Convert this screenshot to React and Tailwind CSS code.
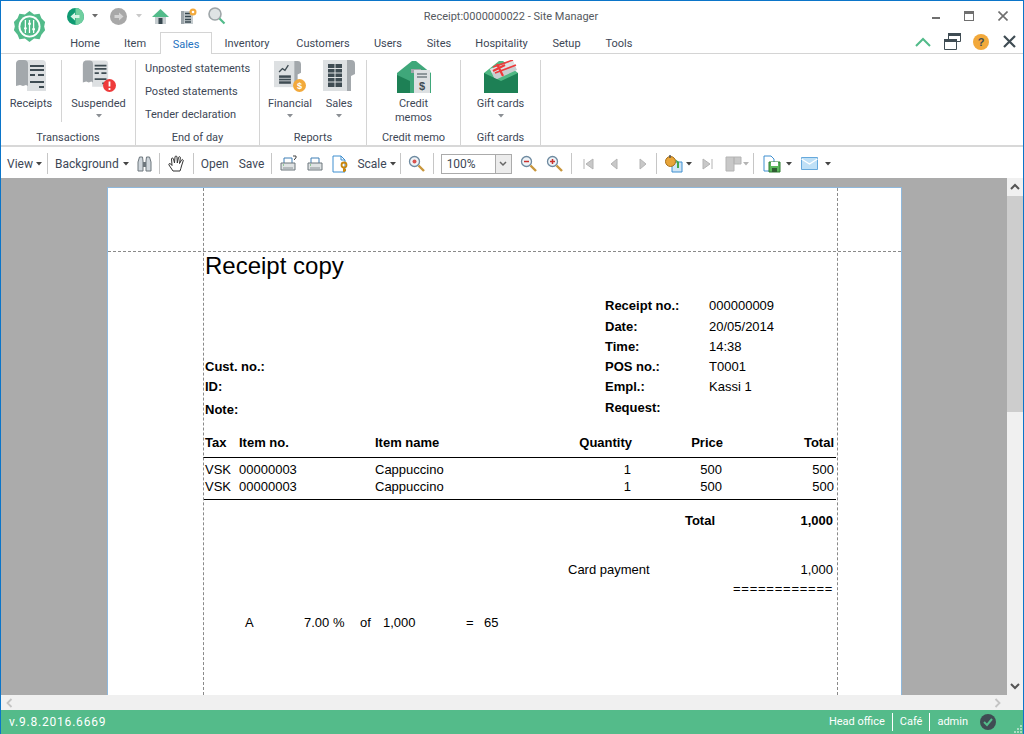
const ui = { fontFamily: 'Roboto, "Noto Sans", sans-serif' };

const Caret = ({ className = "" }) => (
  <svg width="6" height="4" viewBox="0 0 6 4" className={className}>
    <path d="M0 0h6L3 3.5z" fill="currentColor" />
  </svg>
);

const Sep = ({ ml }) => <div className={`h-[21px] w-px bg-[#c6c6c6] ${ml}`} />;

const Logo = () => (
  <svg width="33" height="33" viewBox="0 0 36 36">
    <path
      d="M18 1l5 4 6-1 2 5 4 4-1 5 1 4-4 5-2 5-6-1-5 4-5-4-6 1-2-5-4-5 1-4-1-5 4-4 2-5 6 1z"
      fill="#52bb8a"
    />
    <circle cx="18" cy="18" r="12" fill="#fff" />
    <circle cx="18" cy="18" r="10" fill="#52bb8a" />
    <path d="M13.5 11v14M18 11v14M22.5 11v14" stroke="#fff" strokeWidth="1.4" />
    <path d="M12 20h3M16.5 15h3M21 21h3" stroke="#fff" strokeWidth="2" />
  </svg>
);

const NavCircle = ({ back, gray }) => (
  <svg width="17" height="17" viewBox="0 0 17 17">
    <circle cx="8.5" cy="8.5" r="8.5" fill={gray ? "#a8a8a8" : "#0f9a72"} />
    {!gray && <path d="M8.5 0a8.5 8.5 0 0 1 0 17z" fill="#6fcf9f" />}
    {back ? (
      <path d="M3.5 8.5L8 4.5v2.5h4.5v3H8v2.5z" fill="#d8f3e5" />
    ) : (
      <path d="M13.5 8.5L9 4.5v2.5H4.5v3H9v2.5z" fill="#d4d4d4" />
    )}
  </svg>
);

const HomeIcon = () => (
  <svg width="17" height="17" viewBox="0 0 17 17">
    <path d="M8.5 1L17 9H0z" fill="#52bb8a" />
    <path d="M3 9h11v7H3z" fill="#c6cdd0" />
    <path d="M6.5 10h4v6h-4z" fill="#37474f" />
  </svg>
);

const ListStarIcon = () => (
  <svg width="17" height="17" viewBox="0 0 17 17">
    <path d="M1 3h12v13H1z" fill="#c4cbce" />
    <path d="M1 3h3v13H1z" fill="#9aa3a8" />
    <path d="M5 5.5h6M5 8.5h6M5 11.5h6M5 14h6" stroke="#37474f" strokeWidth="1.3" />
    <circle cx="13" cy="4" r="3.5" fill="#f2a93b" />
    <circle cx="13" cy="4" r="1.3" fill="#fff" />
  </svg>
);

const SearchIcon = () => (
  <svg width="18" height="18" viewBox="0 0 18 18">
    <circle cx="7" cy="7" r="6" fill="#dfe3e4" stroke="#9ea5a8" strokeWidth="1.6" />
    <path d="M11.5 11.5L16.5 16.5" stroke="#52bb8a" strokeWidth="2.2" />
  </svg>
);

// grey scroll shaped receipt used on the ribbon
const ReceiptIcon = ({ w = 32, h = 32 }) => (
  <svg width={w} height={h} viewBox="0 0 32 32">
    <path d="M5 0h22a4 4 0 0 1 4 4v27H12V6a3 3 0 0 0-3-3z" fill="#dde0e2" />
    <path d="M4 0h5a4 4 0 0 1 4 4v22l-2-1-3 1-3-1-4 1V4a4 4 0 0 1 3-4z" fill="#a3a8ac" />
    <path d="M15 6h14M15 10h14M15 15h5M23 15h6M15 22h14M24 27h5" stroke="#3f4c53" strokeWidth="2" />
  </svg>
);

const Receipts2 = () => (
  <div className="relative mr-[6px] h-[32px] w-[28px]">
    <ReceiptIcon w={27} h={28} />
    <svg width="13" height="13" viewBox="0 0 13 13" className="absolute bottom-0 right-[-6px]">
      <circle cx="6.5" cy="6.5" r="6.5" fill="#ee3b3b" />
      <path d="M6.5 2.5v5M6.5 9v2" stroke="#fff" strokeWidth="1.8" />
    </svg>
  </div>
);

const SheetIcon = ({ small }) => (
  <svg width={small ? 27 : 32} height={small ? 29 : 32} viewBox="0 0 32 32">
    <path d="M0 0h24v31H0z" fill="#dde0e2" />
    <path d="M24 0h4a4 4 0 0 1 4 4v10l-4 2v15h-4z" fill="#a3a8ac" />
    {small ? (
      <>
        <path d="M6 17h14v10H6z" fill="#3f4c53" />
        <path d="M6 20.5h14M6 23.5h14" stroke="#dde0e2" strokeWidth="1" />
        <path d="M6 13l4-4 3 2 4-6" stroke="#3f4c53" strokeWidth="1.6" fill="none" />
      </>
    ) : (
      <>
        <path d="M5 4h14v23H5z" fill="#3f4c53" />
        <path d="M5 8.5h14M5 13h14M5 17.5h14M5 22h14M12 4v23" stroke="#dde0e2" strokeWidth="1" />
      </>
    )}
  </svg>
);

const FinancialIcon = () => (
  <div className="relative h-[32px] w-[32px]">
    <SheetIcon small />
    <svg width="13" height="13" viewBox="0 0 13 13" className="absolute bottom-0 right-0">
      <circle cx="6.5" cy="6.5" r="6.5" fill="#f2a93b" />
      <text x="6.5" y="10" textAnchor="middle" fontSize="9" fontWeight="700" fill="#fff" fontFamily="Liberation Sans">$</text>
    </svg>
  </div>
);

const EnvelopeIcon = ({ gift }) => (
  <svg width="34" height="33" viewBox="0 0 34 33">
    <path d="M0 13L15 1h4l15 12v20H0z" fill={gift ? "#4fb883" : "#3fa77a"} />
    {gift ? (
      <>
        <path d="M6 9l23-8 4 9-22 10z" fill="#c9ced0" />
        <path d="M6 9l23-8 1.5 4L8 13z" fill="#dfe3e4" />
        <path d="M9 7l20-7M11 13l21-8" stroke="#ee3b3b" strokeWidth="1.6" />
        <path d="M13 4l6 12M9 11l12-6" stroke="#ee3b3b" strokeWidth="2.2" />
        <path d="M0 13l17 8 17-8v20H0z" fill="#1d8055" />
      </>
    ) : (
      <>
        <path d="M0 15l13 6v12H0z" fill="#1d8055" />
        <path d="M14 9h10v4h-10z" fill="#a3a8ac" />
        <path d="M17 10h16v23H17z" fill="#dde0e2" />
        <path d="M20 14h10M20 17h10" stroke="#3f4c53" strokeWidth="1.2" />
        <text x="25" y="30" textAnchor="middle" fontSize="11" fontWeight="700" fill="#3f4c53" fontFamily="Liberation Sans">$</text>
      </>
    )}
  </svg>
);

const Binoculars = () => (
  <svg width="15" height="16" viewBox="0 0 15 16" className="ml-[8px]">
    <path d="M1 6l1.5-5h3L6 5v10H1zM9 5l.5-4h3L14 6v9H9z" fill="#cfd6dc" stroke="#6d767d" />
    <path d="M6 6h3v5H6z" fill="#6d767d" />
  </svg>
);

const HandIcon = () => (
  <svg width="18" height="17" viewBox="0 0 18 17" className="ml-[8px]">
    <path
      d="M5 16L1 10c-.7-1.3.8-2 1.8-1L4 10.5 3.5 4c0-1.3 1.7-1.3 2 0L6.5 8 7 2c.1-1.3 1.9-1.3 2 0l.3 6 1.2-5.5c.3-1.2 2-1 1.9.3L11.5 8.5 13.5 5c.6-1 2.1-.4 1.7.8L13.500 11c-.5 2-1 3.5-1.5 5z"
      fill="#fff"
      stroke="#333"
    />
  </svg>
);

const Printer = ({ help, className }) => (
  <svg width="17" height="17" viewBox="0 0 17 17" className={className}>
    <path d="M4 3h8v6H4z" fill="#fff" stroke="#3f7fb5" />
    <path d="M1 8h14v7H1z" fill="#dfe3e4" stroke="#6d767d" />
    <path d="M3 13h10" stroke="#8a9297" />
    <path d="M3 10h1" stroke="#42b04a" />
    {help && <path d="M13 1h3v2l-1.5 1v1" stroke="#444" fill="none" />}
  </svg>
);

const PageSetup = () => (
  <svg width="17" height="18" viewBox="0 0 17 18" className="ml-[8px]">
    <path d="M1 1h8l4 4v12H1z" fill="#fff" stroke="#3f8fd0" />
    <path d="M9 1v4h4" fill="none" stroke="#3f8fd0" />
    <circle cx="12" cy="10" r="2.5" fill="none" stroke="#c8860d" strokeWidth="1.8" />
    <path d="M12 12v5M11 15h3" stroke="#c8860d" strokeWidth="1.8" />
  </svg>
);

const Magnifier = ({ mark, className }) => (
  <svg width="17" height="17" viewBox="0 0 17 17" className={className}>
    <circle cx="6.5" cy="6.5" r="5" fill="#eef3f7" stroke="#6e8aa0" strokeWidth="1.3" />
    <path d="M10.5 10.5L16 16" stroke="#c8963c" strokeWidth="2.4" />
    {mark === "dot" && <circle cx="6.5" cy="6.5" r="2" fill="#d9534f" />}
    {mark === "minus" && <path d="M4 6.5h5" stroke="#c9302c" strokeWidth="1.5" />}
    {mark === "plus" && <path d="M4 6.5h5M6.5 4v5" stroke="#c9302c" strokeWidth="1.5" />}
  </svg>
);

const NavArrow = ({ d, className }) => (
  <svg width="11" height="12" viewBox="0 0 11 12" className={className}>
    <path d={d} fill="#c8c8c8" stroke="#b4b4b4" />
  </svg>
);

const ColorIcon = () => (
  <svg width="18" height="18" viewBox="0 0 18 18" className="ml-[8px]">
    <path d="M7 7h10v10H7z" fill="#cfe5f6" stroke="#3f8fd0" />
    <path d="M10 4l4 3v6h-2V8z" fill="#42a54a" />
    <circle cx="5.5" cy="6.5" r="5" fill="#e8a53a" stroke="#a86f16" />
    <path d="M5 0v3" stroke="#555" strokeWidth="1.5" />
  </svg>
);

const MultiPage = () => (
  <svg width="20" height="16" viewBox="0 0 20 16" className="ml-[12px]">
    <path d="M1 1h8v14H1zM9 1h7v7H9z" fill="#c8c8c8" stroke="#b4b4b4" />
  </svg>
);

const SaveIcon = () => (
  <svg width="18" height="18" viewBox="0 0 18 18" className="ml-[9px]">
    <path d="M1 1h7l3 3v12H1z" fill="#fff" stroke="#3f8fd0" />
    <path d="M6 7h11v10H6z" fill="#5cb85c" stroke="#2f7d32" />
    <path d="M8 7h7v4H8z" fill="#fff" />
    <path d="M9 13h5v4H9z" fill="#2f5d32" />
  </svg>
);

const MailIcon = () => (
  <svg width="17" height="13" viewBox="0 0 17 13" className="ml-[9px]">
    <path d="M.5.5h16v12H.5z" fill="#bfe0f6" stroke="#66a9dc" />
    <path d="M.5 2l8 5 8-5" fill="none" stroke="#fff" strokeWidth="1.2" />
  </svg>
);

const RibbonButton = ({ icon, label, caret, width }) => (
  <div className={`flex flex-col items-center ${width}`}>
    <div className="flex h-[32px] items-start justify-center">{icon}</div>
    <div className="mt-[5px] text-center leading-[14px]">{label}</div>
    {caret && <Caret className="mt-[3px] text-[#8b8f94]" />}
  </div>
);

const RibbonGroup = ({ label, width, children }) => (
  <div className={`flex h-[85px] shrink-0 flex-col border-r border-[#d4d4d4] ${width}`}>
    <div className="flex h-[71px] items-start">{children}</div>
    <div className="text-center leading-[15px]">{label}</div>
  </div>
);

const tabsBefore = [
  ["Home", "w-[50px]"],
  ["Item", "w-[50px]"],
];

const tabsAfter = [
  ["Inventory", "w-[70px]"],
  ["Customers", "w-[82px]"],
  ["Users", "w-[48px]"],
  ["Sites", "w-[54px]"],
  ["Hospitality", "w-[71px]"],
  ["Setup", "w-[59px]"],
  ["Tools", "w-[46px]"],
];

const doc = { fontFamily: '"Liberation Sans", Arial, sans-serif' };

const TableRow = ({ cells, bold }) => (
  <div className={`flex h-[17px] items-center text-[13px] leading-[17px] ${bold ? "font-bold" : ""}`}>
    <div className="w-[34px]">{cells[0]}</div>
    <div className="w-[136px]">{cells[1]}</div>
    <div className="w-[120px]">{cells[2]}</div>
    <div className={`text-right ${bold ? "w-[137px]" : "w-[136px]"}`}>{cells[3]}</div>
    <div className="w-[91px] text-right">{cells[4]}</div>
    <div className={`text-right ${bold ? "w-[111px]" : "w-[112px]"}`}>{cells[5]}</div>
  </div>
);

const InfoRow = ({ label, value, h = "h-[20px]" }) => (
  <div className={`flex items-center ${h}`}>
    <div className="w-[104px] font-bold">{label}</div>
    <div>{value}</div>
  </div>
);

function Receipt() {
  return (
    <div className="relative h-[508px] w-[795px] shrink-0 overflow-hidden border-x border-t border-[#8fb8dc] bg-white" style={doc}>
      {/* page margins */}
      <div className="absolute bottom-0 left-[95px] top-0 border-l border-dashed border-[#8a8a8a]" />
      <div className="absolute bottom-0 left-[729px] top-0 border-l border-dashed border-[#8a8a8a]" />
      <div className="absolute left-0 right-0 top-[63px] border-t border-dashed border-[#8a8a8a]" />

      <div className="ml-[95px] w-[633px] pt-[64px] text-[13px] text-black">
        <div className="h-[28px] pl-[2px] text-[24px] leading-[28px]">Receipt copy</div>

        <div className="flex h-[124px] pl-[1px] pt-[16px]">
          <div className="w-[401px] pl-[1px] pt-[61px] font-bold">
            <div className="flex h-[20px] items-center">Cust. no.:</div>
            <div className="flex h-[20px] items-center">ID:</div>
            <div className="mt-[3px] flex h-[20px] items-center">Note:</div>
          </div>
          <div>
            <InfoRow label="Receipt no.:" value="000000009" />
            <InfoRow label="Date:" value="20/05/2014" h="h-[21px]" />
            <InfoRow label="Time:" value="14:38" />
            <InfoRow label="POS no.:" value="T0001" />
            <InfoRow label="Empl.:" value="Kassi 1" />
            <InfoRow label="Request:" value="" h="h-[21px]" />
          </div>
        </div>

        <div className="mt-[30px] pl-[2px]">
          <TableRow bold cells={["Tax", "Item no.", "Item name", "Quantity", "Price", "Total"]} />
        </div>
        <div className="mt-[6px] h-px bg-black" />
        <div className="mt-[3px] pl-[2px]">
          <TableRow cells={["VSK", "00000003", "Cappuccino", "1", "500", "500"]} />
          <TableRow cells={["VSK", "00000003", "Cappuccino", "1", "500", "500"]} />
        </div>
        <div className="mt-[4px] h-px bg-black" />

        <div className="ml-[1px] mt-[12px] flex h-[17px] items-center font-bold leading-[17px]">
          <div className="w-[511px] text-right">Total</div>
          <div className="w-[118px] text-right">1,000</div>
        </div>

        <div className="ml-[1px] mt-[32px] flex h-[17px] items-center leading-[17px]">
          <div className="ml-[364px] w-[147px]">Card payment</div>
          <div className="w-[118px] text-right">1,000</div>
        </div>
        <div className="ml-[530px] mt-[2px] h-[17px] w-[100px] overflow-hidden whitespace-nowrap leading-[17px] tracking-[0.75px]">============</div>

        <div className="ml-[1px] mt-[17px] flex h-[17px] items-center leading-[17px]">
          <div className="ml-[41px] w-[59px]">A</div>
          <div className="w-[56px]">7.00 %</div>
          <div className="w-[23px]">of</div>
          <div className="w-[83px]">1,000</div>
          <div className="w-[18px]">=</div>
          <div>65</div>
        </div>
      </div>
    </div>
  );
}

export default function App() {
  return (
    <div className="flex h-[734px] w-[1024px] flex-col overflow-hidden border-x border-t border-[#0b75c9] bg-white text-[11px] text-[#3d4756]" style={ui}>
      {/* title bar */}
      <div className="flex h-[31px] shrink-0 items-center">
        <div className="ml-[12px] mt-[19px] w-[33px]">
          <Logo />
        </div>
        <div className="ml-[21px] flex items-center pb-[1px]">
          <NavCircle back />
          <Caret className="ml-[8px] text-[#6b6b6b]" />
          <div className="ml-[12px]">
            <NavCircle gray />
          </div>
          <Caret className="ml-[9px] text-[#c9c9c9]" />
          <div className="ml-[10px]"><HomeIcon /></div>
          <div className="ml-[11px]"><ListStarIcon /></div>
          <div className="ml-[11px]"><SearchIcon /></div>
        </div>
        <div className="ml-[185px] mt-[1px] w-[200px] whitespace-nowrap text-center text-[#55595e]">Receipt:0000000022 - Site Manager</div>
        <div className="ml-auto mr-[15px] flex items-center gap-[24px] pb-[1px] text-[#6f6f6f]">
          <div className="mt-[3px] h-[2px] w-[8px] bg-[#6f6f6f]" />
          <div className="h-[10px] w-[10px] border border-t-[3px] border-[#6f6f6f]" />
          <svg width="10" height="10" viewBox="0 0 10 10">
            <path d="M.5.5l9 9M9.5.5l-9 9" stroke="#6f6f6f" strokeWidth="1.6" />
          </svg>
        </div>
      </div>

      {/* tabs */}
      <div className="-mt-[1px] flex h-[23px] shrink-0 items-end border-b border-[#d4d4d4] pl-[59px]">
        {tabsBefore.map(([name, cls]) => (
          <div key={name} className={`h-[22px] text-center leading-[25px] ${cls}`}>{name}</div>
        ))}
        <div className="-mb-px h-[22px] w-[52px] border-x border-t border-[#d4d4d4] bg-white text-center leading-[24px] text-[#1f72bf]">Sales</div>
        {tabsAfter.map(([name, cls]) => (
          <div key={name} className={`h-[22px] text-center leading-[25px] ${cls}`}>{name}</div>
        ))}
        <div className="mb-[3px] ml-auto mr-[7px] flex items-center">
          <svg width="16" height="10" viewBox="0 0 16 10">
            <path d="M1 9l7-7 7 7" fill="none" stroke="#52bb8a" strokeWidth="2" />
          </svg>
          <svg width="17" height="17" viewBox="0 0 17 17" className="ml-[13px]">
            <path d="M4.5.5h12v8h-12z" fill="#fff" stroke="#3f4c53" />
            <path d="M4 0h13v3H4z" fill="#3f4c53" />
            <path d="M.5 6.5h12v10H.5z" fill="#fff" stroke="#3f4c53" />
            <path d="M0 6h13v3H0z" fill="#3f4c53" />
          </svg>
          <svg width="16" height="16" viewBox="0 0 16 16" className="ml-[12px]">
            <circle cx="8" cy="8" r="8" fill="#f2a93b" />
            <text x="8" y="12" textAnchor="middle" fontSize="11" fontWeight="700" fill="#3f4c53" fontFamily="Liberation Sans">?</text>
          </svg>
          <svg width="13" height="13" viewBox="0 0 13 13" className="ml-[14px]">
            <path d="M1 1l11 11M12 1L1 12" stroke="#3f4c53" strokeWidth="2.2" />
          </svg>
        </div>
      </div>

      {/* ribbon */}
      <div className="flex h-[93px] shrink-0 border-b-2 border-[#d8d8d8] pt-[6px]">
        <RibbonGroup label="Transactions" width="w-[135px]">
          <div className="flex h-[62px] border-r border-[#d4d4d4]">
            <RibbonButton icon={<ReceiptIcon />} label="Receipts" width="w-[60px]" />
          </div>
          <RibbonButton icon={<Receipts2 />} label="Suspended" caret width="w-[73px]" />
        </RibbonGroup>
        <RibbonGroup label="End of day" width="w-[124px]">
          <div className="ml-[9px] flex flex-col gap-[8px] pt-[1px] leading-[15px]">
            <div>Unposted statements</div>
            <div>Posted statements</div>
            <div>Tender declaration</div>
          </div>
        </RibbonGroup>
        <RibbonGroup label="Reports" width="w-[107px]">
          <div className="ml-[8px] flex">
            <RibbonButton icon={<FinancialIcon />} label="Financial" caret width="w-[44px]" />
            <RibbonButton icon={<SheetIcon />} label="Sales" caret width="w-[54px]" />
          </div>
        </RibbonGroup>
        <RibbonGroup label="Credit memo" width="w-[94px]">
          <RibbonButton icon={<EnvelopeIcon />} label={<>Credit<br />memos</>} width="w-full" />
        </RibbonGroup>
        <RibbonGroup label="Gift cards" width="w-[80px]">
          <RibbonButton icon={<EnvelopeIcon gift />} label="Gift cards" caret width="w-full" />
        </RibbonGroup>
      </div>

      {/* preview toolbar */}
      <div className="flex h-[31px] shrink-0 items-center whitespace-nowrap pt-[2px] text-[12px] text-[#3d4756]">
        <span className="ml-[6px]">View</span>
        <Caret className="ml-[3px] text-[#444]" />
        <Sep ml="ml-[5px]" />
        <span className="ml-[7px]">Background</span>
        <Caret className="ml-[4px] text-[#444]" />
        <Binoculars />
        <Sep ml="ml-[7px]" />
        <HandIcon />
        <Sep ml="ml-[7px]" />
        <span className="ml-[7px]">Open</span>
        <span className="ml-[10px]">Save</span>
        <Sep ml="ml-[7px]" />
        <Printer help className="ml-[8px]" />
        <Printer className="ml-[10px]" />
        <PageSetup />
        <span className="ml-[8px]">Scale</span>
        <Caret className="ml-[3px] text-[#444]" />
        <Sep ml="ml-[4px]" />
        <Magnifier mark="dot" className="ml-[7px]" />
        <Sep ml="ml-[8px]" />
        <div className="ml-[7px] flex h-[20px] w-[71px] items-center border border-[#ababab]">
          <span className="flex-1 pl-[5px]">100%</span>
          <div className="flex h-full w-[16px] items-center justify-center border-l border-[#ababab] bg-[#ececec]">
            <svg width="8" height="6" viewBox="0 0 8 6">
              <path d="M1 1l3 3 3-3" fill="none" stroke="#666" strokeWidth="1.5" />
            </svg>
          </div>
        </div>
        <Magnifier mark="minus" className="ml-[8px]" />
        <Magnifier mark="plus" className="ml-[9px]" />
        <Sep ml="ml-[8px]" />
        <NavArrow d="M1 1v10M10 1v10L3 6z" className="ml-[11px]" />
        <NavArrow d="M8 1v10L2 6z" className="ml-[15px]" />
        <NavArrow d="M3 1v10l6-5z" className="ml-[17px]" />
        <Sep ml="ml-[8px]" />
        <ColorIcon />
        <Caret className="ml-[3px] text-[#444]" />
        <NavArrow d="M1 1v10l7-5zM10 1v10" className="ml-[10px]" />
        <MultiPage />
        <Caret className="-ml-[2px] text-[#b4b4b4]" />
        <Sep ml="ml-[4px]" />
        <SaveIcon />
        <Caret className="ml-[5px] text-[#444]" />
        <MailIcon />
        <Caret className="ml-[7px] text-[#444]" />
      </div>

      {/* preview area */}
      <div className="flex h-[517px] shrink-0">
        <div className="flex flex-1 overflow-hidden bg-[#ababab] pl-[106px] pt-[9px]">
          <Receipt />
        </div>
        <div className="flex w-[16px] shrink-0 flex-col items-center bg-[#f0f0f0]">
          <svg width="16" height="18" viewBox="0 0 16 18">
            <path d="M4 11l4-4 4 4" fill="none" stroke="#555" strokeWidth="2" />
          </svg>
          <div className="h-[216px] w-full bg-[#cdcdcd]" />
          <div className="flex-1" />
          <svg width="16" height="17" viewBox="0 0 16 17">
            <path d="M4 6l4 4 4-4" fill="none" stroke="#555" strokeWidth="2" />
          </svg>
        </div>
      </div>

      {/* horizontal scroll */}
      <div className="flex h-[15px] shrink-0 items-center justify-between bg-[#f0f0f0] pl-[5px] pr-[22px]">
        <svg width="7" height="10" viewBox="0 0 7 10">
          <path d="M5.5 1l-4 4 4 4" fill="none" stroke="#c4c4c4" strokeWidth="1.8" />
        </svg>
        <svg width="7" height="10" viewBox="0 0 7 10">
          <path d="M1.5 1l4 4-4 4" fill="none" stroke="#c4c4c4" strokeWidth="1.8" />
        </svg>
      </div>

      {/* status bar */}
      <div className="relative flex h-[24px] shrink-0 items-center bg-[#54bb8a] text-white">
        <span className="ml-[8px] text-[12px] tracking-[0.8px]">v.9.8.2016.6669</span>
        <div className="ml-auto flex items-center">
          <span>Head office</span>
          <div className="mx-[7px] h-[18px] w-px bg-white" />
          <span>Café</span>
          <div className="mx-[7px] h-[18px] w-px bg-white" />
          <span>admin</span>
          <svg width="16" height="16" viewBox="0 0 16 16" className="ml-[12px] mr-[27px]">
            <circle cx="8" cy="8" r="8" fill="#3f4c53" />
            <path d="M4 8l3 3 5-6" fill="none" stroke="#54bb8a" strokeWidth="2" />
          </svg>
        </div>
        {/* resize grip */}
        <svg width="9" height="9" viewBox="0 0 9 9" className="absolute bottom-0 right-0">
          <path d="M6 0h2v2H6zM3 3h2v2H3zM6 3h2v2H6zM0 6h2v2H0zM3 6h2v2H3zM6 6h2v2H6z" fill="#a9dcc3" />
        </svg>
      </div>
    </div>
  );
}
